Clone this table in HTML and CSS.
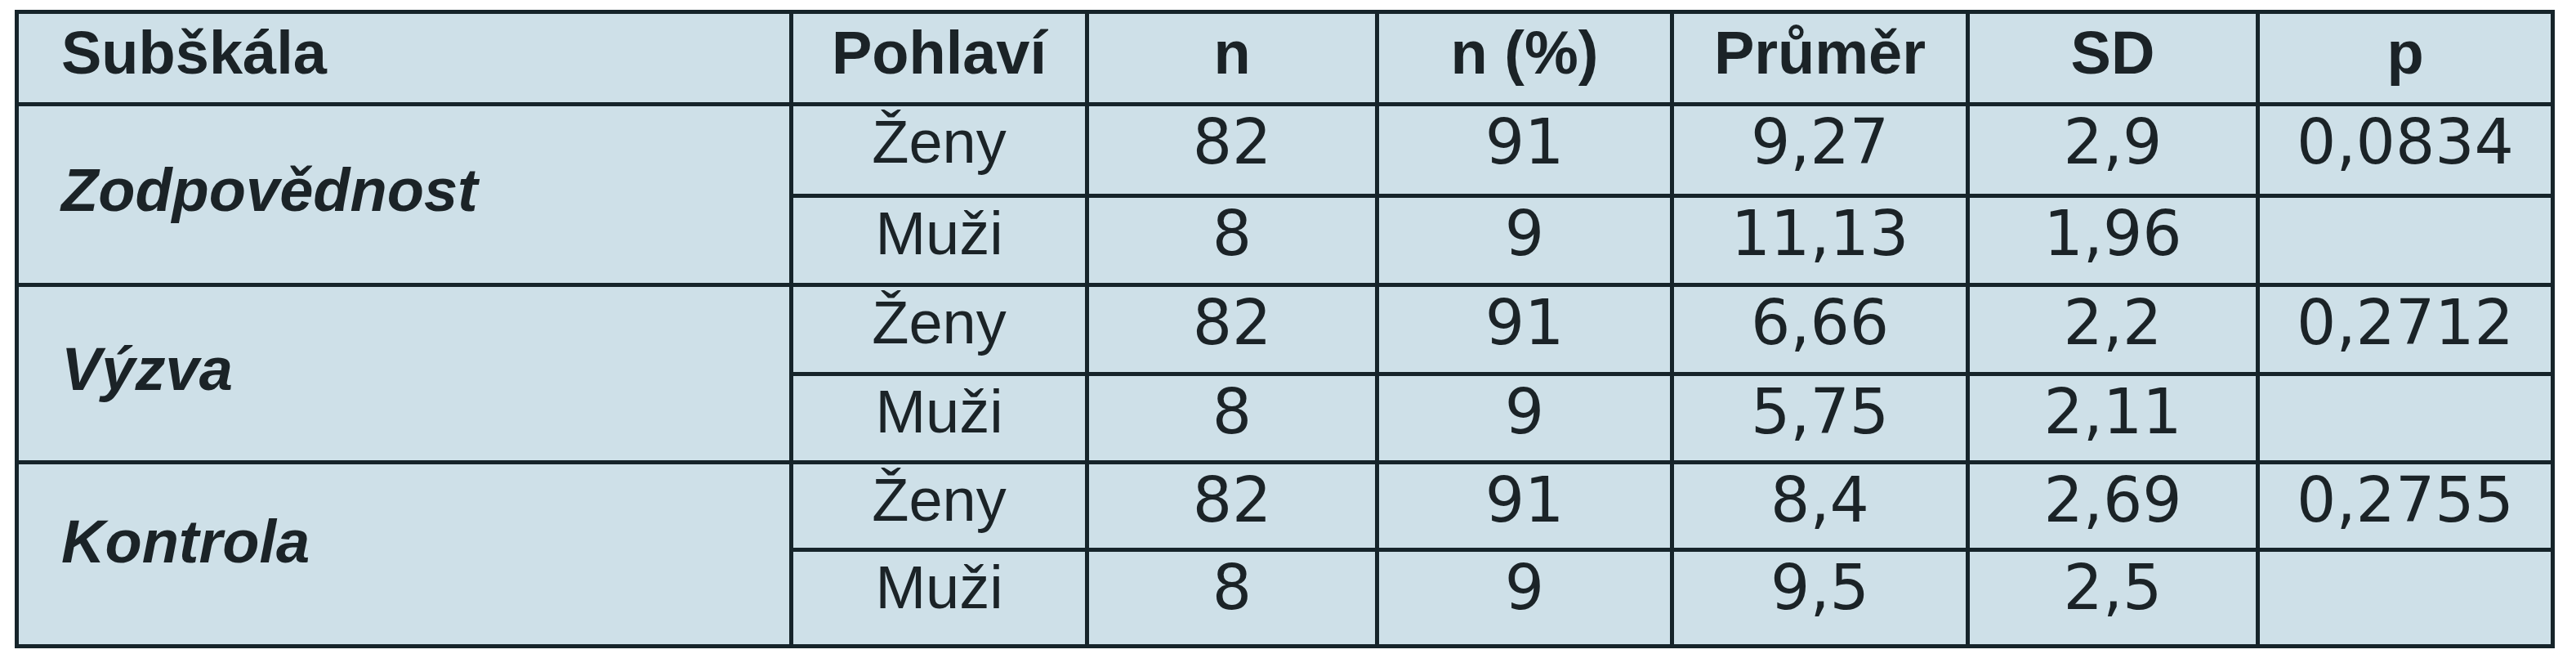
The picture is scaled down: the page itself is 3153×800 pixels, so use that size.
FILE: index.html
```html
<!DOCTYPE html>
<html lang="cs">
<head>
<meta charset="utf-8">
<title>Subškála – Pohlaví</title>
<link rel="stylesheet" href="styles.css">
</head>
<body>
<div class="sheet">
  <div class="grid">
    <div class="cell head left">Subškála</div>
    <div class="cell head">Pohlaví</div>
    <div class="cell head">n</div>
    <div class="cell head">n (%)</div>
    <div class="cell head">Průměr</div>
    <div class="cell head">SD</div>
    <div class="cell head">p</div>

    <div class="cell label">Zodpovědnost</div>
    <div class="cell">Ženy</div>
    <div class="cell num">82</div>
    <div class="cell num">91</div>
    <div class="cell num">9,27</div>
    <div class="cell num">2,9</div>
    <div class="cell num">0,0834</div>
    <div class="cell">Muži</div>
    <div class="cell num">8</div>
    <div class="cell num">9</div>
    <div class="cell num">11,13</div>
    <div class="cell num">1,96</div>
    <div class="cell num"></div>

    <div class="cell label">Výzva</div>
    <div class="cell">Ženy</div>
    <div class="cell num">82</div>
    <div class="cell num">91</div>
    <div class="cell num">6,66</div>
    <div class="cell num">2,2</div>
    <div class="cell num">0,2712</div>
    <div class="cell">Muži</div>
    <div class="cell num">8</div>
    <div class="cell num">9</div>
    <div class="cell num">5,75</div>
    <div class="cell num">2,11</div>
    <div class="cell num"></div>

    <div class="cell label label-last">Kontrola</div>
    <div class="cell">Ženy</div>
    <div class="cell num">82</div>
    <div class="cell num">91</div>
    <div class="cell num">8,4</div>
    <div class="cell num">2,69</div>
    <div class="cell num">0,2755</div>
    <div class="cell">Muži</div>
    <div class="cell num">8</div>
    <div class="cell num">9</div>
    <div class="cell num">9,5</div>
    <div class="cell num">2,5</div>
    <div class="cell num"></div>
  </div>
</div>
</body>
</html>
```

FILE: styles.css
```css
html, body {
  margin: 0;
  padding: 0;
  background: #ffffff;
}

.sheet {
  padding: 12px 0 0 18px;
}

.grid {
  display: grid;
  width: max-content;
  grid-template-columns: 943px 357px 350px 356px 357px 350px 356px;
  grid-template-rows: 108px 107px 104px 104px 103px 102px 113px;
  gap: 5px;
  padding: 5px;
  background: #16242a;
  font-family: "Liberation Sans", Arial, sans-serif;
  color: #1b2327;
}

.cell {
  background: #cee0e8;
  display: flex;
  justify-content: center;
  align-items: flex-start;
  padding-top: 6px;
  font-size: 74px;
  line-height: 76px;
  white-space: nowrap;
  box-sizing: border-box;
}

.head {
  font-weight: bold;
  padding-top: 10px;
}

.left {
  justify-content: flex-start;
  padding-left: 52px;
}

.num {
  font-family: "DejaVu Sans", "Liberation Sans", sans-serif;
  font-size: 76px;
}

.label {
  grid-row: span 2;
  justify-content: flex-start;
  align-items: center;
  padding-top: 0;
  padding-left: 52px;
  padding-bottom: 10px;
  font-weight: bold;
  font-style: italic;
}

.label-last {
  padding-bottom: 30px;
}
```
